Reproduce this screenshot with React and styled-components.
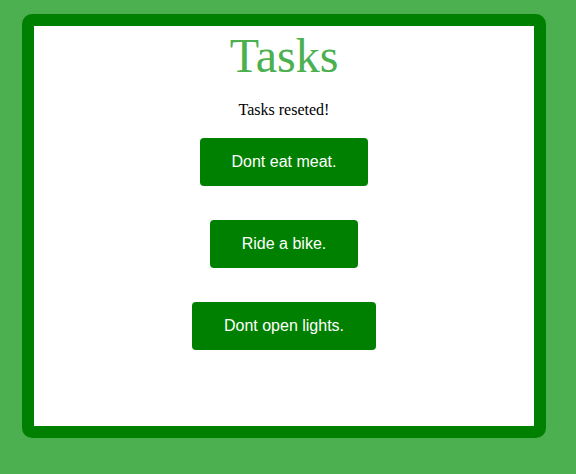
import React from "react";
import styled, { createGlobalStyle } from "styled-components";

const GlobalStyle = createGlobalStyle`
  body {
    margin: 0;
    background: #4caf50;
    font-family: "Liberation Serif", "Times New Roman", serif;
  }
`;

const tasks = ["Dont eat meat.", "Ride a bike.", "Dont open lights."];

export default function App() {
  return (
    <>
      <GlobalStyle />
      <Card>
        <Title>Tasks</Title>
        <Status>Tasks reseted!</Status>
        <TaskList>
          {tasks.map((task) => (
            <TaskButton key={task}>{task}</TaskButton>
          ))}
        </TaskList>
      </Card>
    </>
  );
}

const Card = styled.div`
  display: flex;
  flex-direction: column;
  align-items: center;
  width: 500px;
  height: 400px;
  margin: 14px 0 0 22px;
  background: #fff;
  border: 12px solid #008000;
  border-radius: 10px;
`;

const Title = styled.h1`
  margin: 2px 0 0;
  font-size: 48px;
  font-weight: normal;
  line-height: normal;
  color: #4caf50;
`;

const Status = styled.p`
  margin: 18px 0 0;
  font-size: 16px;
  color: #000;
`;

const TaskList = styled.div`
  display: flex;
  flex-direction: column;
  align-items: center;
  gap: 34px;
  margin-top: 19px;
`;

const TaskButton = styled.button`
  padding: 15px 32px;
  border: none;
  border-radius: 4px;
  background: #008000;
  color: #fff;
  font-family: "Liberation Sans", Arial, sans-serif;
  font-size: 16px;
  line-height: 18px;
  cursor: pointer;
`;
